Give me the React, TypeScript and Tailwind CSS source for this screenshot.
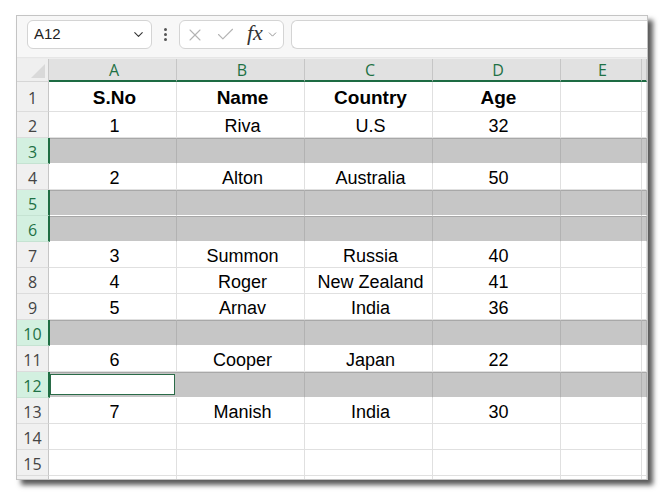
import React from 'react';
import { ChevronDown, X, Check } from 'lucide-react';

type Row = { n: number; cells: string[]; hidden?: boolean; selA?: boolean; h?: string; noLabel?: boolean };

const rows: Row[] = [
  { n: 1, cells: ['S.No', 'Name', 'Country', 'Age'], h: 'h-[30px]' },
  { n: 2, cells: ['1', 'Riva', 'U.S', '32'] },
  { n: 3, cells: [], hidden: true },
  { n: 4, cells: ['2', 'Alton', 'Australia', '50'] },
  { n: 5, cells: [], hidden: true },
  { n: 6, cells: [], hidden: true },
  { n: 7, cells: ['3', 'Summon', 'Russia', '40'] },
  { n: 8, cells: ['4', 'Roger', 'New Zealand', '41'] },
  { n: 9, cells: ['5', 'Arnav', 'India', '36'] },
  { n: 10, cells: [], hidden: true },
  { n: 11, cells: ['6', 'Cooper', 'Japan', '22'] },
  { n: 12, cells: [], hidden: true, selA: true },
  { n: 13, cells: ['7', 'Manish', 'India', '30'] },
  { n: 14, cells: [] },
  { n: 15, cells: [] },
  { n: 16, cells: [], noLabel: true },
];

const colWidths = ['w-[128px]', 'w-[128px]', 'w-[128px]', 'w-[128px]', 'w-[81px]', 'flex-1'];
const letters = ['A', 'B', 'C', 'D', 'E', ''];

export default function App() {
  return (
    <div className="w-[665px] h-[497px] bg-white overflow-hidden" style={{ fontFamily: '"Liberation Sans", Arial, sans-serif' }}>
      <div className="ml-[16px] mt-[15px] w-[632px] h-[465px] border border-[#c4c4c4] bg-white overflow-hidden flex flex-col shadow-[5px_5px_5px_rgba(0,0,0,0.65)]">
        {/* formula bar */}
        <div className="h-[42px] shrink-0 bg-[#f7f7f7] flex items-start pt-[4px] pl-[10px] border-b border-[#e6e6e6]">
          <div className="w-[125px] h-[29px] bg-white border border-[#d4d4d4] rounded-[6px] flex items-center pl-[6px] pr-[5px]">
            <span className="text-[15px] text-[#222] flex-1">A12</span>
            <ChevronDown className="w-[15px] h-[15px] text-[#333]" strokeWidth={1.7} />
          </div>
          <div className="w-[27px] h-[29px] flex flex-col items-center justify-center gap-[2px]">
            <div className="w-[3px] h-[3px] rounded-full bg-[#555]" />
            <div className="w-[3px] h-[3px] rounded-full bg-[#555]" />
            <div className="w-[3px] h-[3px] rounded-full bg-[#555]" />
          </div>
          <div className="w-[105px] h-[29px] bg-white border border-[#d4d4d4] rounded-[6px] flex items-center pl-[5px]">
            <X className="w-[20px] h-[20px] text-[#b4b4b4]" strokeWidth={1.3} />
            <Check className="w-[21px] h-[21px] text-[#b4b4b4] ml-[10px]" strokeWidth={1.3} />
            <span className="ml-[11px] text-[22px] italic text-[#333] leading-none -mt-[3px]" style={{ fontFamily: '"Liberation Serif", "Times New Roman", serif' }}>fx</span>
            <ChevronDown className="w-[13px] h-[13px] text-[#888] ml-[3px]" strokeWidth={1.6} />
          </div>
          <div className="ml-[7px] flex-1 h-[29px] bg-white border border-[#d4d4d4] rounded-l-[6px] border-r-0" />
        </div>
        <div className="h-[1px] shrink-0 bg-[#ededed]" />

        {/* column header */}
        <div className="h-[23px] shrink-0 flex bg-[#e1e1e1]">
          <div className="w-[32px] h-full bg-[#efefef] border-r border-[#c8c8c8] border-b border-b-[#d6d6d6] relative overflow-hidden">
            <div className="absolute right-[3px] bottom-[3px] w-0 h-0 border-l-[14px] border-l-transparent border-b-[14px] border-b-[#d9d9d9]" />
          </div>
          {letters.map((l, i) => (
            <div key={i} className={`${colWidths[i]} h-full border-r border-[#c6c6c6] border-b-2 border-b-[#1d6b43] flex items-center justify-center pl-[3px] text-[16px] text-[#1e7145]`} style={{ fontFamily: '"Open Sans", sans-serif' }}>
              {l}
            </div>
          ))}
        </div>

        {/* rows */}
        {rows.map((r) => (
          <div key={r.n} className={`${r.h ?? 'h-[26px]'} shrink-0 flex`}>
            <div
              className={
                r.hidden
                  ? 'w-[33px] -mr-[1px] relative z-10 h-full bg-[#d3f0e0] border-r-2 border-[#1f6e43] border-b border-b-[#c5e3d2] flex items-center justify-center pt-[2px] text-[16px] text-[#1e7145]'
                  : 'w-[32px] h-full bg-[#f0f0f0] border-r border-[#c6c6c6] border-b border-b-[#dcdcdc] flex items-center justify-center pt-[2px] text-[16px] text-[#444]'
              }
              style={{ fontFamily: '"Open Sans", sans-serif' }}
            >
              {r.noLabel ? '' : r.n}
            </div>
            {colWidths.map((w, i) => {
              if (r.hidden && i === 0 && r.selA) {
                return (
                  <div key={i} className={`${w} h-full bg-[#c6c6c6] border-b border-b-white shadow-[inset_0_1px_0_#a8a8a8] p-[2px] pl-[1px]`}>
                    <div className="w-full h-full bg-white border border-[#2a6b48]" />
                  </div>
                );
              }
              if (r.hidden) {
                return (
                  <div key={i} className={`${w} h-full bg-[#c6c6c6] border-r border-[#b2b2b2] border-b border-b-white shadow-[inset_0_1px_0_#a8a8a8]`} />
                );
              }
              return (
                <div
                  key={i}
                  className={`${w} h-full border-r border-[#e0e0e0] border-b border-b-[#e0e0e0] flex items-center justify-center pl-[4px] pt-[4px] text-black ${r.n === 1 ? 'text-[19px] font-bold' : 'text-[18px]'}`}
                >
                  {r.cells[i] ?? ''}
                </div>
              );
            })}
          </div>
        ))}
      </div>
    </div>
  );
}
